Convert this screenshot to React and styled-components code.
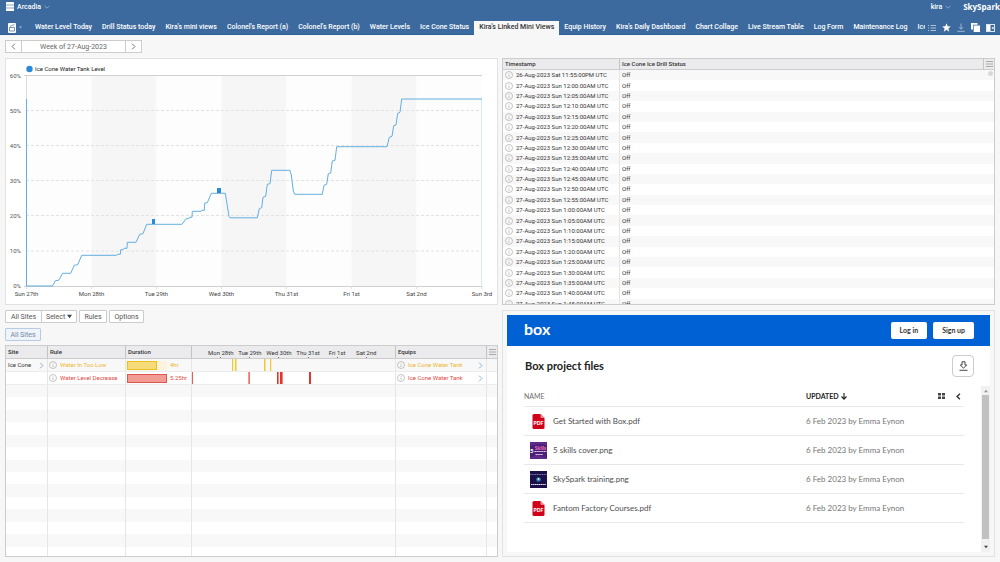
import React from "react";
import styled, { createGlobalStyle, css } from "styled-components";

const GlobalStyle = createGlobalStyle`
  *, *::before, *::after { box-sizing: border-box; }
  body {
    margin: 0;
    background: #f7f7f7;
    color: #333;
    font: 7px/10px Roboto, sans-serif;
  }
  button, select { font: inherit; color: inherit; margin: 0; padding: 0; border: 0; background: none; cursor: pointer; }
  a { color: inherit; text-decoration: none; }
  table { border-spacing: 0; }
  th, td { padding: 0; text-align: left; }
  svg { display: block; flex: none; }
`;

/* ---------- header ---------- */

const Header = styled.header`
  background: #3c6a9e;
  color: #fff;
  font-weight: 500;
  border-bottom: 1px solid #2f5f97;
`;

const TopBar = styled.div`
  display: flex;
  align-items: center;
  height: 13px;
  padding: 0 0 0 6px;
`;

const MenuButton = styled.button`
  display: flex;
  align-items: center;
  gap: 3px;
`;

const Brand = styled.span`
  margin-left: 12px;
  font: 700 8px/12px "Open Sans", sans-serif;
`;

const Spacer = styled.div`
  flex: 1;
`;

const TabBar = styled.div`
  display: flex;
  align-items: center;
  height: 21px;
  padding: 8px 5px 0 8px;
`;

const Tabs = styled.nav`
  display: flex;
  flex: 1;
  min-width: 0;
  overflow: hidden;
  margin-left: 8px;
  margin-bottom: -1px;
`;

const Tab = styled.a`
  flex: none;
  padding: 0 5px;
  line-height: 13px;
  height: 14px;
  white-space: nowrap;
  ${(p) => p.$active && css`
    background: #f7f7f7;
    color: #333;
  `}
`;

const IconGroup = styled.div`
  display: flex;
  align-items: center;
  gap: 6px;
  margin-left: 3px;
`;

/* ---------- page ---------- */

const Main = styled.main`
  padding: 5px;
`;

const DateBar = styled.div`
  display: inline-flex;
  height: 13px;
  margin-bottom: 5px;
  border: 1px solid #ccc;
  background: #fff;
  vertical-align: top;
`;

const DateStep = styled.button`
  display: grid;
  place-items: center;
  width: 15px;
`;

const DateLabel = styled.button`
  width: 105px;
  border: solid #ccc;
  border-width: 0 1px;
  color: #666;
`;

const Board = styled.div`
  display: grid;
  grid-template-columns: repeat(2, minmax(0, 1fr));
  gap: 5px 4px;
`;

const Panel = styled.section`
  height: 247px;
  border: 1px solid ${(p) => (p.$strong ? "#ccc" : "#e2e2e2")};
  background: #fff;
  overflow: hidden;
`;

/* ---------- data tables ---------- */

const Grid = styled.table`
  display: block;
  font-size: 6px;
`;

const Head = styled.thead`
  display: block;
`;

const gridRow = css`
  display: grid;
  grid-template-columns: ${(p) => p.$cols};
`;

const HeadRow = styled.tr`
  ${gridRow}
  height: ${(p) => p.$h}px;
  background: #ebebed;
  border-bottom: 1px solid #ccc;
`;

const Th = styled.th`
  display: flex;
  align-items: center;
  padding-left: ${(p) => (p.$flush ? 0 : 2)}px;
  justify-content: ${(p) => (p.$center ? "center" : "flex-start")};
  font-weight: 500;
  & + & { border-left: 1px solid #c4c4c4; }
`;

const Body = styled.tbody`
  display: grid;
  grid-auto-rows: 1fr;
  height: ${(p) => p.$h}px;
`;

const Row = styled.tr`
  ${gridRow}
  &:nth-child(odd) { background: #f8f8f8; }
  ${(p) => p.$lined && css`border-bottom: 1px solid #ececec;`}
`;

const Td = styled.td`
  display: flex;
  align-items: center;
  gap: 3px;
  min-width: 0;
  padding-left: ${(p) => (p.$flush ? 0 : p.$tight ? 1 : 2)}px;
  color: ${(p) => p.$tone || "#333"};
  white-space: nowrap;
  & + & { border-left: 1px solid #e6e6e6; }
`;

const ScrollCell = styled(Td)`
  && { border-left: 0; }
  align-items: flex-start;
  justify-content: flex-end;
  padding: 1px 1px 0 0;
`;

const ScrollDot = styled.span`
  width: 5px;
  height: 5px;
  border-radius: 50%;
  background: #d8d8d8;
`;

/* ---------- rules view ---------- */

const RulesView = styled.section`
  display: flex;
  flex-direction: column;
  height: 247px;
`;

const Controls = styled.div`
  display: flex;
  gap: 2px;
  height: 13px;
  margin-bottom: 5px;
`;

const Joined = styled.div`
  display: flex;
  border: 1px solid #ccc;
  border-radius: 1px;
  background: #fff;
`;

const Control = styled.button`
  min-width: ${(p) => p.$w}px;
  border: ${(p) => (p.$bare ? 0 : 1)}px solid #ccc;
  border-radius: 1px;
  background: #fff;
  color: #555;
`;

const SelectBox = styled.label`
  display: flex;
  align-items: center;
  width: 35px;
  padding-left: 4px;
  border-left: 1px solid #ccc;
  color: #555;
`;

const Select = styled.select`
  appearance: none;
  width: 21px;
  outline: 0;
`;

const Chip = styled.button`
  align-self: flex-start;
  width: 36px;
  height: 13px;
  margin-bottom: 4px;
  border: 1px solid #b9cbe4;
  border-radius: 1px;
  background: #eff4fa;
  color: #7488a6;
`;

const RulesFrame = styled.div`
  flex: 1;
  min-height: 0;
  overflow: hidden;
  border: 1px solid #ccc;
  background: #fff;
`;

const DayScale = styled.div`
  display: grid;
  grid-template-columns: repeat(6, 1fr);
  width: 100%;
  height: 100%;
  padding: 0 7%;
`;

const Day = styled.span`
  display: flex;
  flex-direction: column;
  align-items: center;
  justify-content: flex-end;
  line-height: 8px;
  font-weight: 400;
  white-space: nowrap;
  &::after { content: ""; width: 1px; height: 1px; background: #777; }
`;

const DurationTrack = styled.span`
  width: 40px;
  height: 9px;
  background: ${(p) => p.$tint};
`;

const DurationFill = styled.span`
  display: block;
  height: 100%;
  border: 1px solid ${(p) => p.$line};
  background: ${(p) => p.$fill};
`;

const Timeline = styled.svg`
  width: 100%;
  height: 12px;
`;

const Push = styled.span`
  margin-left: auto;
  padding-right: 2px;
`;

/* ---------- box embed ---------- */

const BoxPanel = styled(Panel)`
  padding: 4px;
  background: #f7f7f7;
`;

const BoxFrame = styled.div`
  display: flex;
  flex-direction: column;
  height: 100%;
  background: #fff;
  color: #4e4e4e;
  font: 8px/12px Lato, sans-serif;
`;

const BoxBar = styled.div`
  display: flex;
  align-items: center;
  gap: 6px;
  height: 31px;
  padding: 0 16px 0 17px;
  background: #0061d5;
`;

const BoxLogo = styled.span`
  padding-bottom: 3px;
  color: #fff;
  font: 700 16px/20px Lato, sans-serif;
`;

const BoxButton = styled.a`
  height: 17px;
  padding: 0 9px;
  border-radius: 2px;
  background: #fff;
  color: #333;
  font-weight: 700;
  font-size: 7px;
  line-height: 16px;
`;

const BoxTitleRow = styled.div`
  display: flex;
  align-items: center;
  justify-content: space-between;
  height: 40px;
  padding: 0 16px 0 18px;
`;

const BoxTitle = styled.h2`
  margin: 0;
  color: #222;
  font-size: 11px;
  font-weight: 700;
`;

const DownloadButton = styled.button`
  display: grid;
  place-items: center;
  width: 22px;
  height: 22px;
  border: 1px solid #ccc;
  border-radius: 4px;
`;

const BoxScroll = styled.div`
  display: flex;
  flex: 1;
  min-height: 0;
`;

const Files = styled.table`
  flex: 1;
  display: block;
  padding: 0 17px;
`;

const FileBody = styled.tbody`
  display: block;
`;

const FileRow = styled.tr`
  display: grid;
  grid-template-columns: 282fr 132fr 26px;
  align-items: center;
  height: ${(p) => (p.$head ? 21 : 29)}px;
  border-bottom: 1px solid #e8e8e8;
`;

const FileHead = styled.th`
  display: flex;
  align-items: center;
  gap: 2px;
  font-size: 7px;
  font-weight: ${(p) => (p.$sorted ? 700 : 400)};
  color: ${(p) => (p.$sorted ? "#222" : "#6f6f6f")};
`;

const ViewButtons = styled(FileHead)`
  gap: 10px;
`;

const FileName = styled.td`
  display: flex;
  align-items: center;
  gap: 6px;
  padding-left: 6px;
`;

const FileDate = styled.td`
  color: #767676;
`;

const Scrollbar = styled.div`
  display: flex;
  flex-direction: column;
  align-items: center;
  justify-content: space-between;
  width: 9px;
  padding: 3px 1px;
  background: #f1f1f1;
`;

const Thumb = styled.div`
  flex: 1;
  width: 100%;
  margin: 2px 0 6px;
  background: #c1c1c1;
`;

/* ---------- icons ---------- */

const Chevron = ({ dir = "right", size = 7, color = "#666", weight = 1.3 }) => {
  const d = { right: "M3 1 7 5 3 9", left: "M7 1 3 5 7 9", down: "M1 3 5 7 9 3" }[dir];
  return (
    <svg width={size} height={size} viewBox="0 0 10 10" fill="none" stroke={color} strokeWidth={weight} aria-hidden="true">
      <path d={d} />
    </svg>
  );
};

const InfoIcon = () => (
  <svg width="8" height="8" viewBox="0 0 8 8" fill="none" stroke="#aaa" strokeWidth="0.7" aria-hidden="true">
    <circle cx="4" cy="4" r="3.5" />
    <path d="M4 3.500V6M4 2V2.700" />
  </svg>
);

const StackIcon = () => (
  <svg width="8" height="9" viewBox="0 0 8 9" aria-hidden="true">
    <rect width="8" height="9" rx="0.6" fill="#fff" />
    <path d="M0 3H8M0 6H8" stroke="#3c6a9e" strokeWidth="0.6" />
  </svg>
);

const AppIcon = () => (
  <svg width="8" height="10" viewBox="0 0 8 10" aria-hidden="true">
    <rect width="8" height="10" rx="1" fill="#fff" />
    <path d="M1.500 4.500H6.500V8H1.500ZM1.800 3.600 5 2 6.500 1.800" fill="none" stroke="#3c6a9e" strokeWidth="0.7" />
  </svg>
);

const MenuIcon = () => (
  <svg width="7" height="6" viewBox="0 0 7 6" stroke="#999" strokeWidth="0.8" aria-hidden="true">
    <path d="M0 .5H7M0 3H7M0 5.500H7" />
  </svg>
);

const ListIcon = () => (
  <svg width="8" height="8" viewBox="0 0 8 8" stroke="#cbd9ea" strokeWidth="0.8" aria-hidden="true">
    <path d="M0 1.500H1M2.500 1.500H8M0 4H1M2.500 4H8M0 6.500H1M2.500 6.500H8" />
  </svg>
);

const StarIcon = () => (
  <svg width="9" height="9" viewBox="0 0 10 10" fill="#fff" aria-hidden="true">
    <path d="M5 .4 6.300 3.700 9.800 3.900 7.100 6.100 8 9.600 5 7.600 2 9.600 2.900 6.100.2 3.900 3.700 3.700Z" />
  </svg>
);

const SaveIcon = () => (
  <svg width="8" height="9" viewBox="0 0 8 9" fill="none" stroke="#a9c0da" strokeWidth="0.9" aria-hidden="true">
    <path d="M4 .5V6M2 4.200 4 6.200 6 4.200M.3 8.300H7.700" />
  </svg>
);

const CopyIcon = () => (
  <svg width="9" height="9" viewBox="0 0 9 9" fill="#fff" aria-hidden="true">
    <path d="M0 0H6.500V1.800H2V6.500H0Z" />
    <rect x="2.700" y="2.500" width="6.300" height="6.500" />
  </svg>
);

const SideIcon = () => (
  <svg width="9" height="8" viewBox="0 0 9 8" aria-hidden="true">
    <rect x=".5" y=".5" width="8" height="7" fill="none" stroke="#dbe5f0" />
    <rect x="1" y="1" width="3.500" height="6" fill="#fff" />
    <path d="M7.500 2.500 5.500 4 7.500 5.500Z" fill="#fff" />
  </svg>
);

const Caret = ({ up, color = "#444", size = 5 }) => (
  <svg width={size} height={size} viewBox="0 0 6 6" fill={color} aria-hidden="true">
    <path d={up ? "M0 5 3 1 6 5Z" : "M0 1 3 5 6 1Z"} />
  </svg>
);

const DownloadIcon = () => (
  <svg width="9" height="10" viewBox="0 0 9 10" fill="none" stroke="#333" strokeWidth="0.9" aria-hidden="true">
    <path d="M3 .8H6V4H7.700L4.500 7.200 1.300 4H3ZM.5 9.300H8.500" />
  </svg>
);

const SortIcon = () => (
  <svg width="6" height="7" viewBox="0 0 6 7" fill="none" stroke="#222" strokeWidth="1.1" aria-hidden="true">
    <path d="M3 0V6M.5 3.500 3 6.100 5.500 3.500" />
  </svg>
);

const TilesIcon = () => (
  <svg width="7" height="6" viewBox="0 0 7 6" fill="#444" aria-hidden="true">
    <path d="M0 0H3V2.500H0ZM4 0H7V2.500H4ZM0 3.500H3V6H0ZM4 3.500H7V6H4Z" />
  </svg>
);

const PdfIcon = () => (
  <svg width="17" height="17" viewBox="0 0 17 17" aria-hidden="true">
    <path d="M4 1H10.500L14.500 5V14.500A1.500 1.500 0 0 1 13 16H4A1.500 1.500 0 0 1 2.500 14.500V2.500A1.500 1.500 0 0 1 4 1Z" fill="#d0021b" />
    <path d="M10.500 1 14.500 5H11.500A1 1 0 0 1 10.500 4Z" fill="#ec8c98" />
    <text x="8.500" y="12" textAnchor="middle" fontFamily="Lato, sans-serif" fontWeight="900" fontSize="5" fill="#fff">PDF</text>
  </svg>
);

const SkillsThumb = () => (
  <svg width="17" height="17" viewBox="0 0 17 17" aria-hidden="true">
    <rect width="17" height="17" fill="#4a1f78" />
    <path d="M0 0H17V3L9 2 0 4ZM0 15 8 13 17 16V17H0Z" fill="#5e2a8c" />
    <text x="10.500" y="7.500" textAnchor="middle" fontFamily="Lato, sans-serif" fontWeight="900" fontSize="5" fill="#e86ab4">Skills</text>
    <text x="0" y="10.500" fontFamily="Lato, sans-serif" fontWeight="900" fontSize="6" fill="#fff">5</text>
    <path d="M4.500 9.500H16.500M5.500 12.500H13" stroke="#e6d8f2" strokeWidth="1" strokeDasharray="1.500 0.400" />
  </svg>
);

const TrainingThumb = () => (
  <svg width="17" height="17" viewBox="0 0 17 17" aria-hidden="true">
    <rect width="17" height="17" fill="#1b1049" />
    <path d="M0 3.500H17" stroke="#7d76a4" strokeWidth="1" strokeDasharray="1.200 0.500" />
    <circle cx="8.500" cy="8.500" r="2.300" fill="#2e7fb8" />
    <circle cx="8.500" cy="8" r="1" fill="#cfe8f5" />
    <path d="M1 13.500H16" stroke="#e4e2ee" strokeWidth="1.200" strokeDasharray="1.500 0.400" />
  </svg>
);

/* ---------- data ---------- */

const tabs = [
  "Water Level Today", "Drill Status today", "Kira's mini views", "Colonel's Report (a)",
  "Colonel's Report (b)", "Water Levels", "Ice Cone Status", "Kira's Linked Mini Views",
  "Equip History", "Kira's Daily Dashboard", "Chart Collage", "Live Stream Table",
  "Log Form", "Maintenance Log", "Ice Cone",
];

const stamps = [
  "26-Aug-2023 Sat 11:55:00PM UTC",
  ...Array.from({ length: 22 }, (_, i) => {
    const hour = i < 12 ? 12 : 1;
    const minute = String((i % 12) * 5).padStart(2, "0");
    return `27-Aug-2023 Sun ${hour}:${minute}:00AM UTC`;
  }),
];

const yTicks = [[60, 75.5], [50, 110.5], [40, 145.5], [30, 180.5], [20, 215.5], [10, 251], [0, 286]];
const xTicks = [
  ["Sun 27th", 26.5], ["Mon 28th", 91.5], ["Tue 29th", 156.5], ["Wed 30th", 221.5],
  ["Thu 31st", 286.5], ["Fri 1st", 351.5], ["Sat 2nd", 416.5], ["Sun 3rd", 482],
];
const levelPath =
  "M26.500 99V286H52L53.300 285 55.300 280.700 58.700 280.300 62.500 273.300H70.700L74.300 265.300 77.700 264.700 81.700 255.300H116.700L117.300 254.300H120.300L120.700 249.700H123L124 248.300H127L127.300 242.300H136L139.700 234.300 143 233.700 146.700 224.300H182L186 218.700H188.700L189.300 217.300H192L192.300 211.300H201L201.700 210.300H204.300L204.700 203 207.300 202.700 211.300 193.300H225.300L229 216.300 230 217.800H257.300L259.300 208.700 261.700 207.700 263 197.300 265.700 196.300 267.300 184.300 270 183.700 271.700 170.300H290L291.300 175 293.300 191 294.700 194.300H322.300L324 185.300 326.700 184.300 328.300 173.700 330.700 173 332.300 161 335 160.300 336.700 146.700H387L389.300 137.300 392 136.300 393.700 125.700 396 125 397.700 113.300 400 112.300 401.700 99H482";

const days = ["Mon 28th", "Tue 29th", "Wed 30th", "Thu 31st", "Fri 1st", "Sat 2nd"];

const rules = [
  {
    site: "Ice Cone", name: "Water In Too Low", duration: "4hr", share: 76,
    text: "#edb62f", fill: "#f5dc78", line: "#e8c020", tint: "#fdf3dc", mark: "#f0c92f",
    marks: [[40, 1.2], [43, 1.5], [72, 1.5], [78, 1.2]],
  },
  {
    site: "", name: "Water Level Decrease", duration: "5.25hr", share: 100,
    text: "#e04a44", fill: "#f29c94", line: "#e0564e", tint: "#fbe6e4", mark: "#e5352b",
    marks: [[0, 0.8], [56.5, 1.2], [85, 1.6], [88, 2.6], [117, 2]],
  },
];

const files = [
  ["Get Started with Box.pdf", PdfIcon],
  ["5 skills cover.png", SkillsThumb],
  ["SkySpark training.png", TrainingThumb],
  ["Fantom Factory Courses.pdf", PdfIcon],
];

const STATUS_COLS = "116px minmax(0, 1fr) 11px";
const RULE_COLS = "41px 78px 66px minmax(0, 1fr) 91px 11px";

/* ---------- views ---------- */

const LevelChart = () => (
  <svg width="100%" height="100%" viewBox="6 59 491 245" role="img" aria-label="Ice Cone Water Tank Level">
    {xTicks.slice(0, -1).map(([label, x], i) => (
      <rect key={label} x={x} y="76" width="65" height="210" fill={i % 2 ? "#f6f6f6" : "#fdfdfd"} />
    ))}
    {yTicks.slice(1, -1).map(([v, y]) => (
      <path key={v} d={`M26 ${y}H482`} stroke="#e2e2e2" strokeDasharray="3 2" />
    ))}
    <path d="M24 75.500H482" stroke="#cfcfcf" />
    <path d="M24 286.500H482" stroke="#cfcfcf" />
    <path d="M26.500 76V286" stroke="#ddd" />
    {xTicks.map(([label, x]) => (
      <g key={label}>
        <path d={`M${x} 286V289`} stroke="#ddd" />
        <text x={x} y="296" textAnchor="middle" fontSize="6" fill="#444">{label}</text>
      </g>
    ))}
    {yTicks.map(([v, y]) => (
      <text key={v} x="21" y={y + 2} textAnchor="end" fontSize="6" fill="#555">{v}%</text>
    ))}
    <path d="M481.500 99V286" stroke="#d6e8f5" />
    <path d={levelPath} fill="none" stroke="#64aee2" strokeWidth="1" />
    <rect x="152" y="219" width="3" height="5" fill="#2b8ad8" />
    <rect x="217" y="188" width="4" height="5" fill="#2b8ad8" />
    <circle cx="29.500" cy="69" r="3.200" fill="#2b8ad8" />
    <text x="35" y="71" fontSize="6" fill="#222">Ice Cone Water Tank Level</text>
  </svg>
);

const StatusTable = () => (
  <Grid>
    <Head>
      <HeadRow $cols={STATUS_COLS} $h={11}>
        <Th>Timestamp</Th>
        <Th>Ice Cone Ice Drill Status</Th>
        <Th $center $flush><button aria-label="Table menu"><MenuIcon /></button></Th>
      </HeadRow>
    </Head>
    <Body $h={239}>
      {stamps.map((stamp, i) => (
        <Row key={stamp} $cols={STATUS_COLS}>
          <Td><InfoIcon />{stamp}</Td>
          <Td>Off</Td>
          <ScrollCell>{i === 0 && <ScrollDot />}</ScrollCell>
        </Row>
      ))}
    </Body>
  </Grid>
);

const RulesTable = () => (
  <Grid>
    <Head>
      <HeadRow $cols={RULE_COLS} $h={13}>
        <Th>Site</Th>
        <Th>Rule</Th>
        <Th>Duration</Th>
        <Th $flush>
          <DayScale>{days.map((d) => <Day key={d}>{d}</Day>)}</DayScale>
        </Th>
        <Th>Equips</Th>
        <Th $center $flush><button aria-label="Table menu"><MenuIcon /></button></Th>
      </HeadRow>
    </Head>
    <Body $h={200}>
      {rules.map((r) => (
        <Row key={r.name} $cols={RULE_COLS} $lined>
          <Td>{r.site}{r.site && <Push><Chevron color="#7fa8d8" /></Push>}</Td>
          <Td $tight $tone={r.text}><InfoIcon />{r.name}</Td>
          <Td $tight $tone={r.text}>
            <DurationTrack $tint={r.tint}>
              <DurationFill $line={r.line} $fill={r.fill} style={{ width: `${r.share}%` }} />
            </DurationTrack>
            {r.duration}
          </Td>
          <Td $flush>
            <Timeline viewBox="0 0 203 12" preserveAspectRatio="none">
              {r.marks.map(([x, w]) => <rect key={x} x={x} width={w} height="12" fill={r.mark} />)}
            </Timeline>
          </Td>
          <Td $tight $tone={r.text}><InfoIcon />Ice Cone Water Tank<Push><Chevron color="#7fa8d8" /></Push></Td>
          <Td $flush />
        </Row>
      ))}
      {Array.from({ length: 14 }, (_, i) => (
        <Row key={i} $cols={RULE_COLS}>
          {days.map((d) => <Td key={d} $flush />)}
        </Row>
      ))}
    </Body>
  </Grid>
);

const BoxEmbed = () => (
  <BoxPanel>
    <BoxFrame>
      <BoxBar>
        <BoxLogo>box</BoxLogo>
        <Spacer />
        <BoxButton href="#login">Log in</BoxButton>
        <BoxButton href="#signup">Sign up</BoxButton>
      </BoxBar>
      <BoxTitleRow>
        <BoxTitle>Box project files</BoxTitle>
        <DownloadButton aria-label="Download"><DownloadIcon /></DownloadButton>
      </BoxTitleRow>
      <BoxScroll>
        <Files>
          <Head>
            <FileRow $head>
              <FileHead>NAME</FileHead>
              <FileHead $sorted>UPDATED <SortIcon /></FileHead>
              <ViewButtons>
                <button aria-label="Grid view"><TilesIcon /></button>
                <button aria-label="Collapse"><Chevron dir="left" color="#333" weight={2} /></button>
              </ViewButtons>
            </FileRow>
          </Head>
          <FileBody>
            {files.map(([name, Icon]) => (
              <FileRow key={name}>
                <FileName><Icon />{name}</FileName>
                <FileDate>6 Feb 2023 by Emma Eynon</FileDate>
              </FileRow>
            ))}
          </FileBody>
        </Files>
        <Scrollbar>
          <Caret up size={4} color="#999" />
          <Thumb />
          <Caret size={4} />
        </Scrollbar>
      </BoxScroll>
    </BoxFrame>
  </BoxPanel>
);

export default function App() {
  return (
    <>
      <GlobalStyle />
      <Header>
        <TopBar>
          <MenuButton><StackIcon />Arcadia<Chevron dir="down" size={6} color="#9db8d6" /></MenuButton>
          <Spacer />
          <MenuButton>kira<Chevron dir="down" size={6} color="#9db8d6" /></MenuButton>
          <Brand>SkySpark</Brand>
        </TopBar>
        <TabBar>
          <MenuButton aria-label="Views"><AppIcon /><Caret size={3} color="#9db8d6" /></MenuButton>
          <Tabs>
            {tabs.map((t) => (
              <Tab key={t} href="#view" $active={t === "Kira's Linked Mini Views"}>{t}</Tab>
            ))}
          </Tabs>
          <IconGroup>
            <button aria-label="List"><ListIcon /></button>
            <button aria-label="Favorite"><StarIcon /></button>
            <button aria-label="Export"><SaveIcon /></button>
            <button aria-label="Copy"><CopyIcon /></button>
            <button aria-label="Side panel"><SideIcon /></button>
          </IconGroup>
        </TabBar>
      </Header>
      <Main>
        <DateBar>
          <DateStep aria-label="Previous week"><Chevron dir="left" /></DateStep>
          <DateLabel>Week of 27-Aug-2023</DateLabel>
          <DateStep aria-label="Next week"><Chevron /></DateStep>
        </DateBar>
        <Board>
          <Panel><LevelChart /></Panel>
          <Panel $strong><StatusTable /></Panel>
          <RulesView>
            <Controls>
              <Joined>
                <Control $bare $w={35}>All Sites</Control>
                <SelectBox>
                  <Select aria-label="Select sites"><option>Select</option></Select>
                  <Caret />
                </SelectBox>
              </Joined>
              <Control $w={28}>Rules</Control>
              <Control $w={35}>Options</Control>
            </Controls>
            <Chip>All Sites</Chip>
            <RulesFrame><RulesTable /></RulesFrame>
          </RulesView>
          <BoxEmbed />
        </Board>
      </Main>
    </>
  );
}
